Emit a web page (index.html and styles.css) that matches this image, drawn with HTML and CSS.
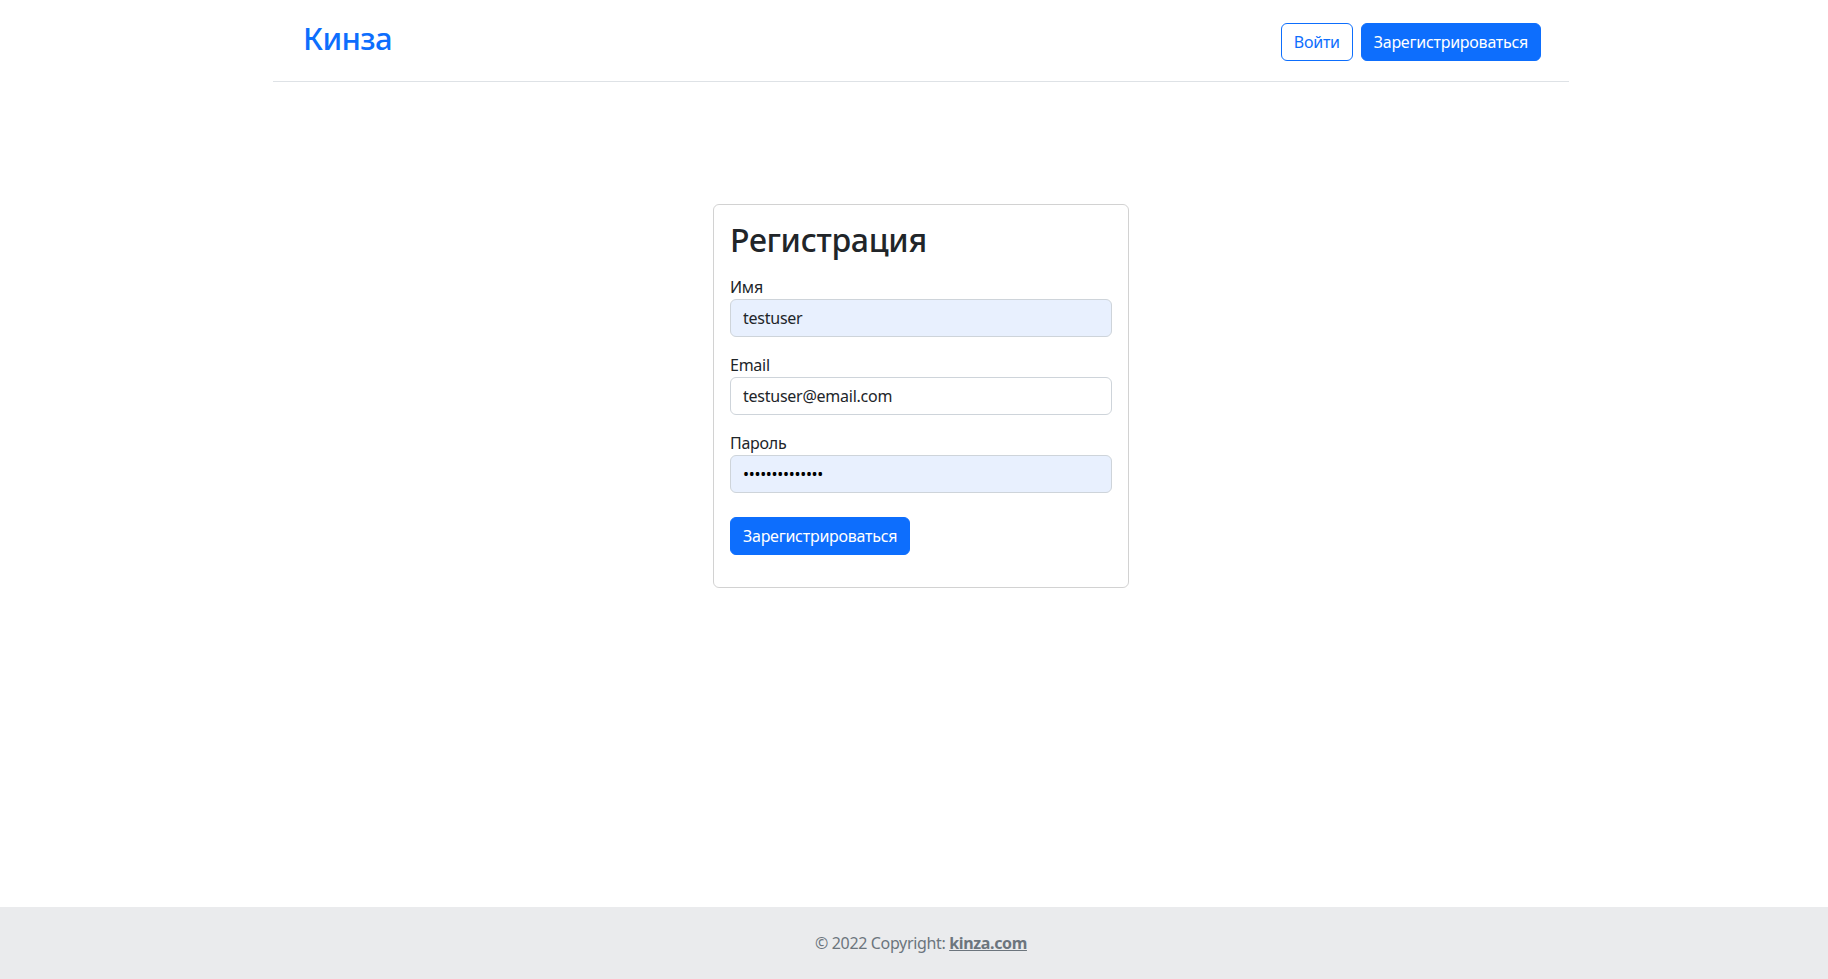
FILE: index.html
```html
<!DOCTYPE html>
<html lang="ru">
<head>
<meta charset="utf-8">
<title>Кинза — Регистрация</title>
<link rel="stylesheet" href="styles.css">
</head>
<body>
<div class="page">
  <div class="container">
    <header class="site-header">
      <a class="brand" href="#">Кинза</a>
      <nav class="auth">
        <a class="btn btn-outline" href="#">Войти</a>
        <a class="btn btn-primary" href="#">Зарегистрироваться</a>
      </nav>
    </header>
    <main class="main">
      <form class="card">
        <h2 class="card-title">Регистрация</h2>
        <div class="field">
          <label class="label" for="name">Имя</label>
          <input class="input autofill" id="name" type="text" value="testuser">
        </div>
        <div class="field">
          <label class="label" for="email">Email</label>
          <input class="input" id="email" type="email" value="testuser@email.com">
        </div>
        <div class="field">
          <label class="label" for="pass">Пароль</label>
          <input class="input autofill pass" id="pass" type="password" value="testpassword12">
        </div>
        <button class="btn btn-primary submit" type="button">Зарегистрироваться</button>
      </form>
    </main>
  </div>
</div>
<footer class="footer">
  <div class="footer-inner">© 2022 Copyright: <a class="footer-link" href="#">kinza.com</a></div>
</footer>
</body>
</html>
```
FILE: styles.css
```css
* { box-sizing: border-box; }
html, body { margin: 0; padding: 0; }
body {
  font-family: "Noto Sans", "Open Sans", sans-serif;
  font-size: 16px;
  line-height: 1.5;
  letter-spacing: -0.25px;
  color: #212529;
  background: #fff;
  min-height: 100vh;
  display: flex;
  flex-direction: column;
}
.page {
  flex: 1;
  padding-left: 14px;
}
.container {
  width: 1296px;
  margin: 0 auto;
}
.site-header {
  height: 82px;
  border-bottom: 1px solid #dee2e6;
  display: flex;
  justify-content: space-between;
  align-items: flex-start;
  padding: 0 28px 0 30px;
}
.brand {
  font-size: 31px;
  font-weight: 500;
  line-height: 48px;
  letter-spacing: -0.6px;
  margin-top: 14px;
  color: #0d6efd;
  text-decoration: none;
}
.auth {
  display: flex;
  gap: 8px;
  margin-top: 23px;
}
.btn {
  display: inline-block;
  font-family: inherit;
  font-size: 16px;
  line-height: 24px;
  letter-spacing: inherit;
  padding: 6px 12px;
  border: 1px solid transparent;
  border-radius: 6px;
  text-decoration: none;
  cursor: pointer;
}
.btn-outline {
  color: #0d6efd;
  border-color: #0d6efd;
  background: #fff;
}
.btn-primary {
  color: #fff;
  background: #0d6efd;
  border-color: #0d6efd;
}
.main {
  padding-top: 122px;
}
.card {
  width: 416px;
  margin: 0 auto;
  border: 1px solid rgba(0, 0, 0, 0.175);
  border-radius: 6px;
  padding: 16px;
}
.card-title {
  font-size: 32px;
  font-weight: 500;
  line-height: 1.2;
  letter-spacing: -0.3px;
  margin: 0 0 16px;
}
.field {
  margin-bottom: 16px;
}
.label {
  display: block;
  line-height: 24px;
}
.input {
  display: block;
  width: 100%;
  height: 38px;
  padding: 6px 12px;
  font-family: inherit;
  font-size: 16px;
  letter-spacing: inherit;
  color: #212529;
  background: #fff;
  border: 1px solid #ced4da;
  border-radius: 6px;
  outline: none;
}
.autofill {
  background: #e8f0fe;
}
.pass {
  color: #000;
  letter-spacing: -0.3px;
}
.submit {
  margin-top: 8px;
  margin-bottom: 16px;
}
.footer {
  background: #eaebed;
}
.footer-inner {
  padding: 24px 0 24px 14px;
  text-align: center;
  color: #6c757d;
  line-height: 24px;
  letter-spacing: -0.35px;
}
.footer-link {
  color: #6c757d;
  font-weight: 700;
  text-decoration: underline;
}
```
